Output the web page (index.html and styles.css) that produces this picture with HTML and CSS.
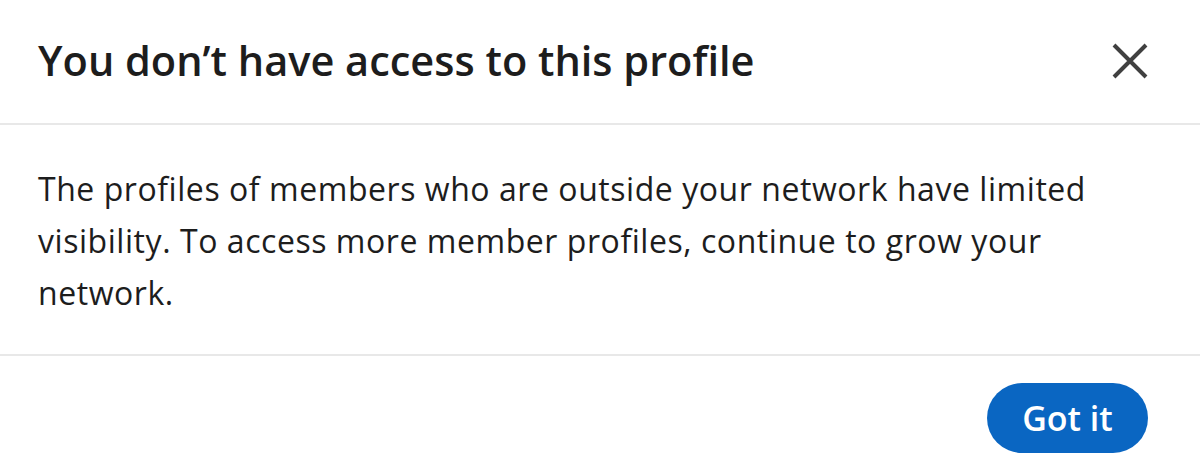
FILE: index.html
```html
<!DOCTYPE html>
<html lang="en">
<head>
<meta charset="utf-8">
<title>You don't have access to this profile</title>
<link rel="stylesheet" href="styles.css">
</head>
<body>
<div class="modal">
  <header class="modal-header">
    <h2 class="modal-title">You don’t have access to this profile</h2>
    <button class="close-btn" aria-label="Dismiss">
      <svg width="36" height="36" viewBox="0 0 36 36" aria-hidden="true">
        <path d="M2 2 L34 34 M34 2 L2 34" stroke="#404040" stroke-width="4" fill="none"/>
      </svg>
    </button>
  </header>
  <div class="modal-body">
    <p>The profiles of members who are outside your network have limited visibility. To access more member profiles, continue to grow your network.</p>
  </div>
  <footer class="modal-footer">
    <button class="primary-btn">Got it</button>
  </footer>
</div>
</body>
</html>
```

FILE: styles.css
```css
* { box-sizing: border-box; }
html, body {
  margin: 0;
  padding: 0;
  background: #ffffff;
}
body {
  font-family: "Open Sans", "Noto Sans", sans-serif;
  color: #191919;
  width: 1200px;
  height: 474px;
  overflow: hidden;
}
.modal {
  display: flex;
  flex-direction: column;
  width: 1200px;
}
.modal-header {
  height: 125px;
  display: flex;
  align-items: center;
  justify-content: space-between;
  padding: 0 52px 0 38px;
  border-bottom: 2px solid #e8e8e8;
}
.modal-title {
  margin: 0 0 3px 0;
  font-size: 41.5px;
  font-weight: 600;
  color: #1d1d1d;
}
.close-btn {
  background: none;
  border: 0;
  padding: 0;
  width: 36px;
  height: 36px;
  display: flex;
  align-items: center;
  justify-content: center;
  margin-bottom: 2px;
}
.modal-body {
  height: 231px;
  padding: 38px 52px 0 38px;
  border-bottom: 2px solid #e8e8e8;
}
.modal-body p {
  margin: 0;
  font-size: 32px;
  letter-spacing: 0.55px;
  line-height: 52px;
  color: #1d1d1d;
}
.modal-footer {
  display: flex;
  justify-content: flex-end;
  padding: 27px 52px 0 38px;
}
.primary-btn {
  height: 70px;
  width: 161px;
  border-radius: 35px;
  background: #0a66c2;
  color: #ffffff;
  border: 0;
  font-family: "Open Sans", "Noto Sans", sans-serif;
  font-size: 34px;
  font-weight: 600;
  padding: 0;
}
```
